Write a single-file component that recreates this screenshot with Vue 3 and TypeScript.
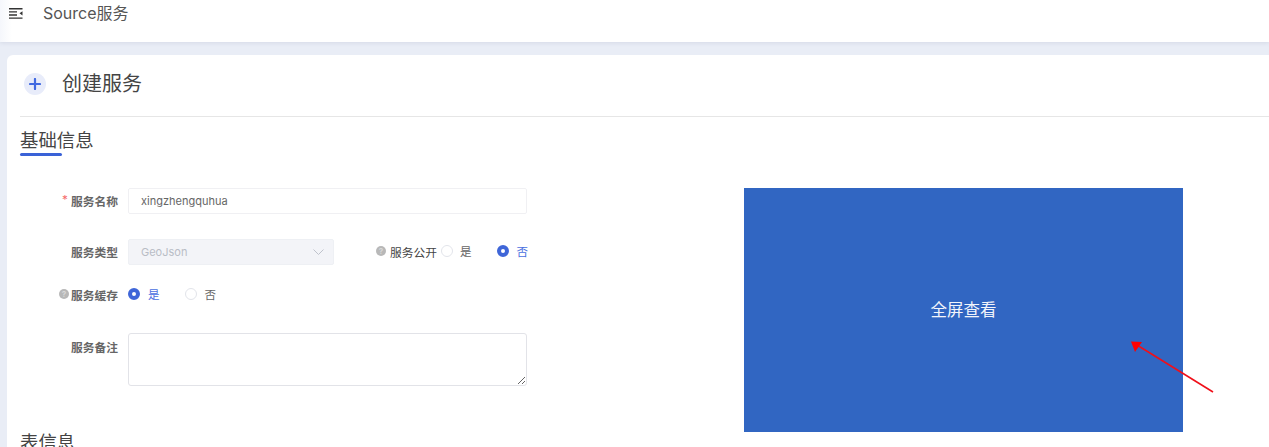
<script setup lang="ts">
const serviceName: string = 'xingzhengquhua'
</script>

<template>
  <div class="page">
    <header class="topbar">
      <svg class="menu-icon" width="14" height="11" viewBox="0 0 14 11" fill="none">
        <path d="M0 .8h13.500M0 3.900h8M0 7h8M0 10.100h13.500" stroke="#333" stroke-width="1.4" />
        <path d="M13.500 3.200v4.200l-3-2.100z" fill="#333" />
      </svg>
      <span class="crumb">Source服务</span>
    </header>
    <main class="main">
      <section class="card">
        <div class="card-head">
          <span class="plus">
            <svg width="12" height="12" viewBox="0 0 12 12">
              <path d="M6 1v10M1 6h10" stroke="#4169e1" stroke-width="2.200" stroke-linecap="round" />
            </svg>
          </span>
          <h1 class="card-title">创建服务</h1>
        </div>
        <div class="section-title"><h2>基础信息</h2><i class="underline"></i></div>
        <div class="columns">
          <form class="form" @submit.prevent>
            <div class="row row-name">
              <label class="label"><em>*</em> 服务名称</label>
              <input class="input" :value="serviceName" />
            </div>
            <div class="row row-type">
              <label class="label">服务类型</label>
              <div class="select">
                <span>GeoJson</span>
                <svg width="11" height="6" viewBox="0 0 11 6" fill="none">
                  <path d="M.5.5l5 5 5-5" stroke="#bfc3cc" stroke-width="1" />
                </svg>
              </div>
              <div class="public">
                <span class="help">?</span>
                <span class="public-label">服务公开</span>
                <span class="radio-dot"></span><span class="opt opt-yes">是</span>
                <span class="radio-dot on"></span><span class="opt on">否</span>
              </div>
            </div>
            <div class="row row-cache">
              <label class="label"><span class="help">?</span>服务缓存</label>
              <div class="radios">
                <span class="radio-dot on"></span><span class="opt on opt-yes-cache">是</span>
                <span class="radio-dot"></span><span class="opt">否</span>
              </div>
            </div>
            <div class="row row-note">
              <label class="label note-label">服务备注</label>
              <textarea class="textarea"></textarea>
            </div>
          </form>
          <div class="preview">全屏查看</div>
        </div>
        <div class="section-title second"><h2>表信息</h2></div>
      </section>
    </main>
    <svg class="arrow" width="1269" height="447" viewBox="0 0 1269 447">
      <path d="M1213 392L1137 345" stroke="#f0101a" stroke-width="1.6" fill="none" />
      <path d="M1131 341.500L1142 342L1135 352z" fill="#ff0000" />
    </svg>
  </div>
</template>

<style>
html, body { margin: 0; height: 447px; overflow: hidden; background: #fff; }
</style>

<style scoped>
.page {
  position: relative;
  width: 1269px;
  height: 447px;
  overflow: hidden;
  background: #e9edf6;
  font-family: Inter, "Noto Sans CJK SC", sans-serif;
  color: #606266;
}
.topbar {
  height: 42px;
  box-sizing: border-box;
  display: flex;
  align-items: flex-start;
  padding: 3px 0 0 9px;
  background: linear-gradient(90deg, #f5f7fc 0, #fff 12px);
  box-shadow: 0 1px 4px rgba(120, 130, 160, .18);
  position: relative;
}
.menu-icon { margin-top: 5px; }
.crumb { margin-left: 20px; font-size: 16px; line-height: 20px; color: #555; }
.main { padding: 13px 0 0 7px; }
.card {
  background: #fff;
  border-radius: 6px 0 0 0;
  padding-left: 13px;
  height: 392px;
  overflow: hidden;
}
.card-head {
  display: flex;
  align-items: center;
  height: 61px;
  border-bottom: 1px solid #e6e6e6;
  padding-left: 4px;
}
.plus {
  width: 22px;
  height: 22px;
  border-radius: 50%;
  background: #e8ecfa;
  display: flex;
  align-items: center;
  justify-content: center;
  margin-top: -4px;
}
.card-title { margin: -4px 0 0 16px; font-size: 20px; font-weight: 400; color: #444; line-height: 28px; }
.section-title { margin-top: 9px; height: 30px; position: relative; }
.section-title h2 { margin: 0; font-size: 18.400px; font-weight: 400; line-height: 28px; color: #444; }
.underline { position: absolute; left: 0; top: 27px; width: 42px; height: 3px; border-radius: 2px; background: #3a62d7; }
.columns { display: flex; margin-top: 32px; }
.form { width: 724px; flex: none; }
.row { display: flex; align-items: center; }
.row-type { margin-top: 25px; }
.row-cache { margin-top: 17px; height: 26px; }
.row-note { margin-top: 25px; align-items: flex-start; }
.label {
  width: 98px;
  flex: none;
  text-align: right;
  font-size: 11.750px;
  font-weight: 600;
  color: #666;
  display: flex;
  align-items: center;
  justify-content: flex-end;
  margin-top: -2px;
}
.label em { color: #f56c6c; font-style: normal; margin-right: 3px; font-weight: 400; }
.note-label { margin-top: 5px; }
.input {
  margin-left: 10px;
  width: 399px;
  height: 26px;
  box-sizing: border-box;
  border: 1px solid #f0f0f3;
  border-radius: 2px;
  padding: 0 12px;
  font: 11px Inter, "Noto Sans CJK SC", sans-serif;
  color: #666;
  outline: none;
}
.select {
  margin-left: 10px;
  width: 206px;
  height: 26px;
  box-sizing: border-box;
  background: #f3f4f8;
  border: 1px solid #eef0f4;
  border-radius: 2px;
  padding: 0 9px 0 12px;
  display: flex;
  align-items: center;
  justify-content: space-between;
  font-size: 11px;
  color: #b9bdc6;
}
.public { display: flex; align-items: center; margin-left: 42px; margin-top: -2px; }
.help {
  width: 10px;
  height: 10px;
  border-radius: 50%;
  background: #b8b8b8;
  color: #d8d8d8;
  font-size: 8px;
  font-weight: 700;
  line-height: 10px;
  text-align: center;
  flex: none;
}
.label .help { margin-right: 2px; }
.public-label { margin-left: 4px; width: 51px; font-size: 11.750px; color: #444; white-space: nowrap; }
.radios { display: flex; align-items: center; margin-left: 10px; margin-top: -2px; }
.radio-dot {
  width: 12px;
  height: 12px;
  box-sizing: border-box;
  border: 1px solid #e2e4ea;
  border-radius: 50%;
  background: #fff;
  flex: none;
}
.radio-dot.on { border: 4px solid #3f66d8; }
.opt { margin-left: 8px; font-size: 11.500px; color: #666; }
.opt.on { color: #4a6fe0; }
.opt-yes { margin-right: 25px; margin-left: 7px; }
.opt-yes-cache { margin-right: 25px; }
.textarea {
  margin-left: 10px;
  width: 399px;
  height: 53px;
  box-sizing: border-box;
  border: 1px solid #e2e3e8;
  border-radius: 3px;
  outline: none;
  display: block;
}
.preview {
  width: 439px;
  height: 244px;
  flex: none;
  background: #3166c2;
  color: #f2f5fb;
  font-size: 16.500px;
  padding-bottom: 3px;
  box-sizing: border-box;
  display: flex;
  align-items: center;
  justify-content: center;
}
.second { margin-top: 0; position: relative; top: -4px; }
.arrow { position: absolute; left: 0; top: 0; pointer-events: none; }
</style>
